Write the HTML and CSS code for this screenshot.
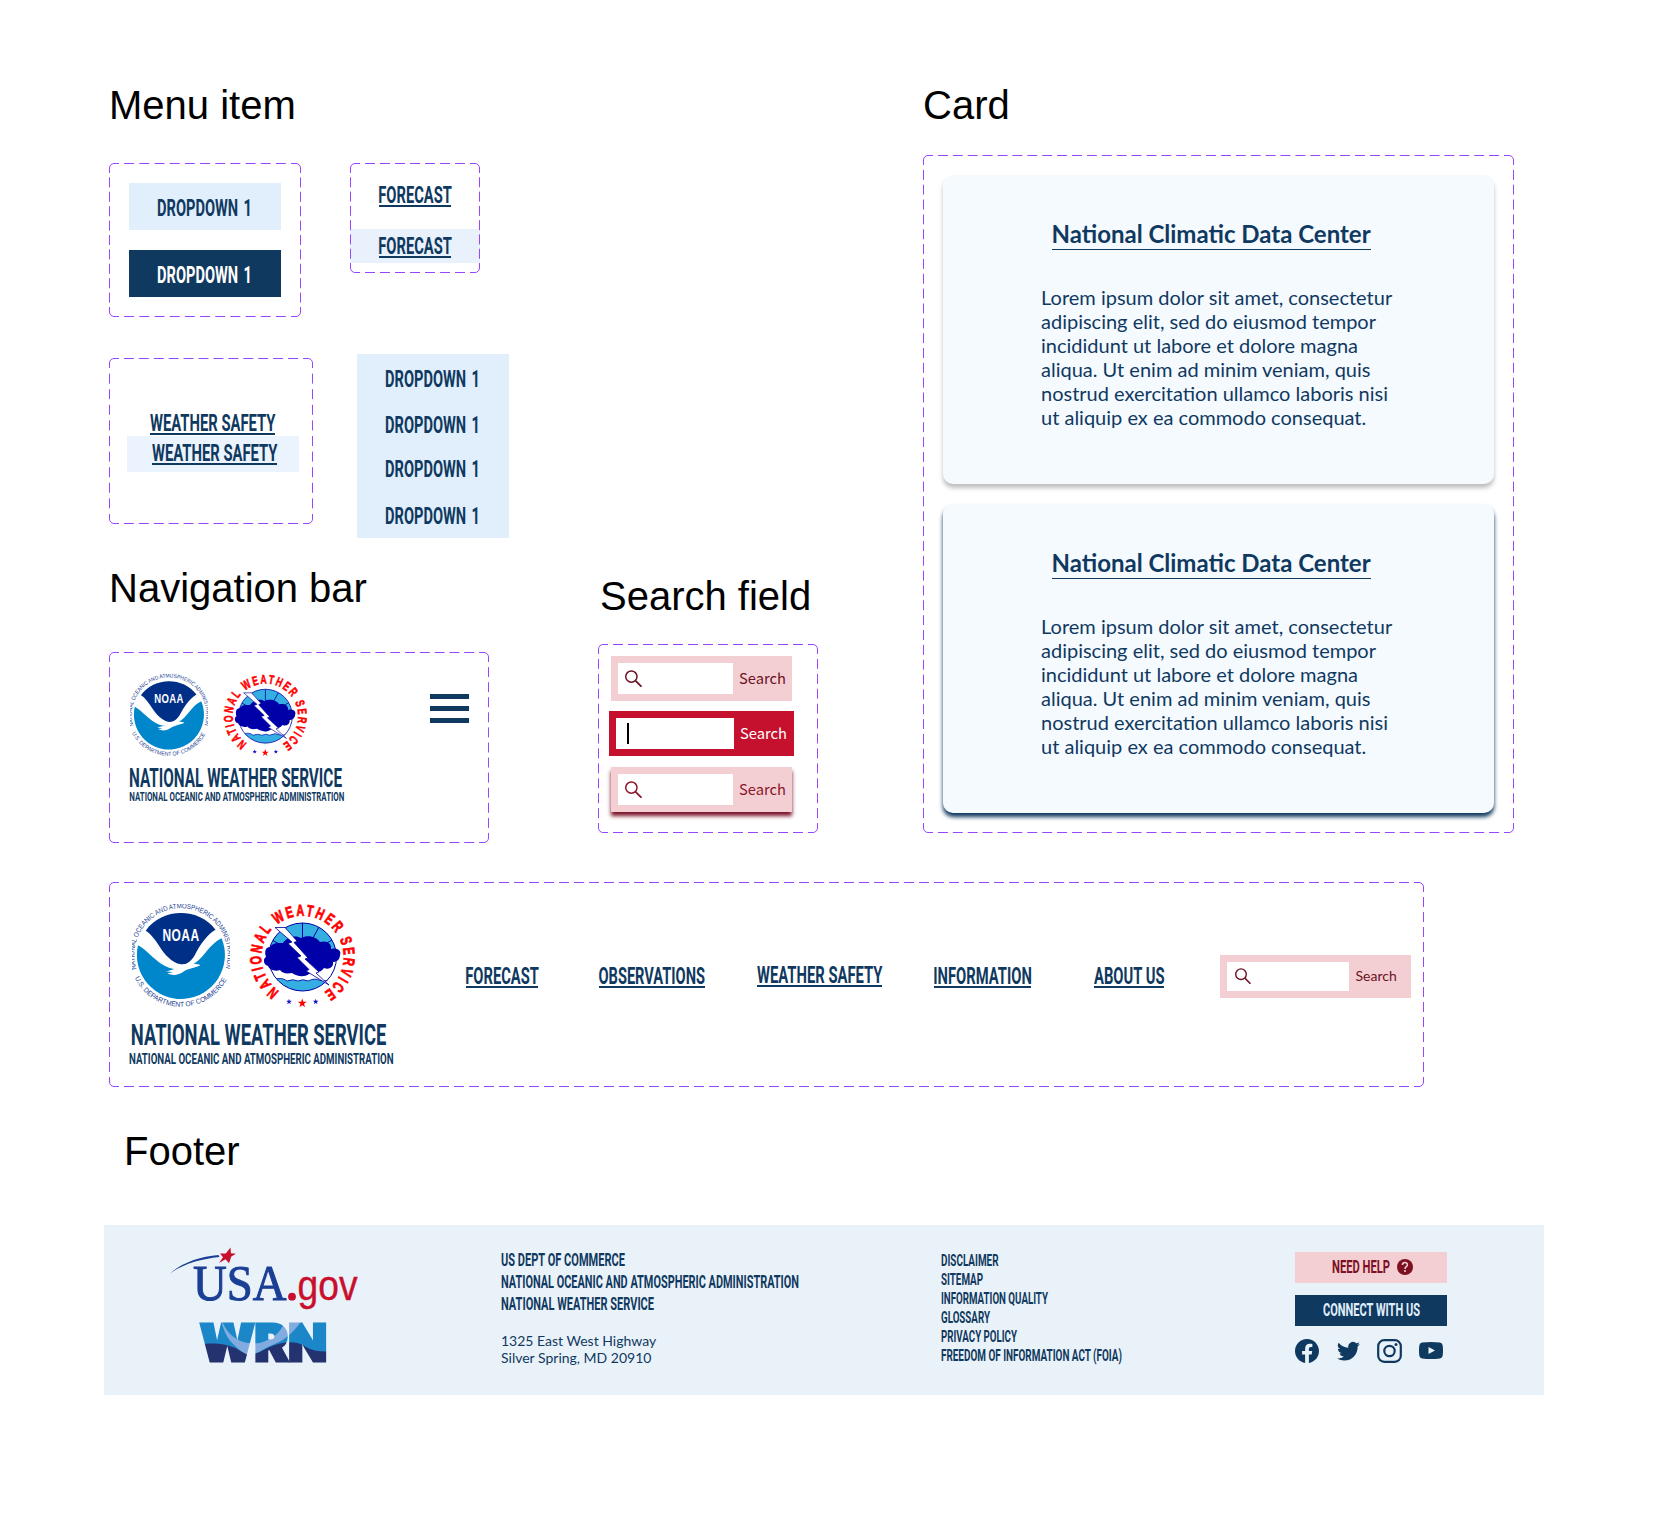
FILE: index.html
```html
<!DOCTYPE html>
<html lang="en">
<head>
<meta charset="utf-8">
<title>National Weather Service components</title>
<link rel="stylesheet" href="styles.css">
</head>
<body>
<svg class="defs" width="0" height="0" aria-hidden="true">
  <defs>
    <path id="noaa-top" d="M4.600 65A46.600 46.600 0 1 1 93.400 65"/>
    <path id="noaa-bottom" d="M2.700 74.100A51.700 51.700 0 0 0 95.300 74.100"/>
    <path id="nws-ring" d="M30.400 87.200A41.200 41.200 0 1 1 76.600 87.200"/>
    <clipPath id="nws-disc"><circle cx="53.500" cy="53" r="34"/></clipPath>
    <symbol id="star" viewBox="-10 -10 20 20"><path d="M0-10 2.400-3.200 9.500-3.100 3.800 1.200 5.900 8.100 0 4-5.900 8.100-3.800 1.200-9.500-3.100-2.400-3.200Z"/></symbol>
    <symbol id="noaa" viewBox="0 0 98 103">
      <g transform="translate(0 .7)">
        <circle cx="49" cy="51" r="44" fill="#fff"/>
        <path fill="#002f87" d="M13.700 26C30 2.500 67 2.500 83.500 25C75 30 68 40 63 50C59 57 54 59.700 50.500 59.700C43 59.500 35 53 29 44C24 36 19 29 13.700 26Z"/>
        <path fill="#0086cb" d="M6 40.500C15 45 25 59 37 63C44 65.500 49 64 53 62.500C71 59 74 41 89.600 33.500A44 44 0 1 1 6 40.500Z"/>
        <path fill="#fff" d="M34 66.500C42 65 46 63 51 59.500C59 60 64 58.500 68.500 60.500C60 64 57 63.500 52 66.500C46 71 40 71 35.500 68.500L41 67.500Z"/>
      </g>
      <text class="noaa-word" x="30.500" y="36.600" textLength="37" lengthAdjust="spacingAndGlyphs">NOAA</text>
      <text class="noaa-ring"><textPath href="#noaa-top" textLength="174" lengthAdjust="spacingAndGlyphs">NATIONAL OCEANIC AND ATMOSPHERIC ADMINISTRATION</textPath></text>
      <text class="noaa-ring"><textPath href="#noaa-bottom" textLength="113" lengthAdjust="spacingAndGlyphs">U.S. DEPARTMENT OF COMMERCE</textPath></text>
    </symbol>
    <symbol id="nws" viewBox="0 0 106 103">
      <g clip-path="url(#nws-disc)">
        <path fill="#fff" d="M19 19H88V88H19Z"/>
        <path fill="#35aee2" d="M19 19H88V45H19Z"/>
        <path fill="none" stroke="#0000a0" d="M53.500 53V19M53.500 53 36 23M53.500 53 23 36M53.500 53 70 23M53.500 53 83 36"/>
        <path fill="#35aee2" stroke="#0000a0" stroke-width=".8" d="M19 78C27 74 33 73 38 77Q44 74.500 49 77Q54 74.500 59 77Q66 73.500 71 76.500L88 77V90H19Z"/>
      </g>
      <circle cx="53.500" cy="53" r="34" fill="none" stroke="#0000a0"/>
      <path fill="#0000a8" d="M21 43C24 38 30 39 34 39C38 32 48 31 52 34C59 30 68 33 71 38C78 36 83 40 82 45C88 43 93 47 91 51C91 56 87 58 84 58C85 63 80 66 75 64C71 70 63 68 60 70C55 74 47 72 43 69C37 70 33 69 31 66C25 68 20 65 19 62C14 61 14 54 17 53C15 47 17 43 21 43Z"/>
      <path fill="#fff" stroke="#0000a0" stroke-width=".8" d="M26 23.500H36L48 37 45 38.500 59 54 56 55 70 68 67 69 80 81 57 67 60 65.500 48 53.500 52 52 39 39.500 43 38Z"/>
      <text class="nws-letters"><textPath href="#nws-ring" textLength="213" lengthAdjust="spacingAndGlyphs">NATIONAL WEATHER SERVICE</textPath></text>
      <use href="#star" x="48.500" y="94.500" width="9.500" height="9.500" fill="#f00"/>
      <use href="#star" x="37" y="94.800" width="6" height="6" fill="#1a1ac8"/>
      <use href="#star" x="63.700" y="94.800" width="6" height="6" fill="#1a1ac8"/>
    </symbol>
    <symbol id="glass" viewBox="0 0 16 16"><circle cx="6" cy="6.200" r="5.300" fill="none" stroke="currentColor" stroke-width="1.400"/><path d="M9.800 10 15.500 15.800" fill="none" stroke="currentColor" stroke-width="1.600"/></symbol>
  </defs>
</svg>

<main class="board">
  <div class="upper">
    <div class="left">
      <h2>Menu item</h2>
      <div class="row row-a">
        <div class="frame f-dropdown">
          <svg class="dash" width="192" height="154"><path stroke-dasharray="10 5.170" stroke-dashoffset="5" d="M5 .5H187M5 153.500H187"/><path stroke-dasharray="10 4.400" stroke-dashoffset="5" d="M.5 5V149M191.500 5V149"/><path d="M.5 5A4.500 4.500 0 0 1 5 .5M187 .5A4.500 4.500 0 0 1 191.500 5M191.500 149A4.500 4.500 0 0 1 187 153.500M5 153.500A4.500 4.500 0 0 1 .5 149"/></svg>
          <div class="dropdown"><svg class="cn" width="95" height="17"><text y="17" textLength="95" lengthAdjust="spacingAndGlyphs">DROPDOWN 1</text></svg></div>
          <div class="dropdown dark"><svg class="cn" width="95" height="17"><text y="17" textLength="95" lengthAdjust="spacingAndGlyphs">DROPDOWN 1</text></svg></div>
        </div>
        <div class="frame f-forecast">
          <svg class="dash" width="130" height="110"><path stroke-dasharray="10 5" stroke-dashoffset="5" d="M5 .5H125M5 109.500H125"/><path stroke-dasharray="10 4.290" stroke-dashoffset="5" d="M.5 5V105M129.500 5V105"/><path d="M.5 5A4.500 4.500 0 0 1 5 .5M125 .5A4.500 4.500 0 0 1 129.500 5M129.500 105A4.500 4.500 0 0 1 125 109.500M5 109.500A4.500 4.500 0 0 1 .5 105"/></svg>
          <div class="fc"><a class="link"><svg class="cn" width="72" height="17"><text y="17" x="-.7" textLength="73.500" lengthAdjust="spacingAndGlyphs">FORECAST</text></svg></a></div>
          <div class="fc hover"><a class="link"><svg class="cn" width="72" height="17"><text y="17" x="-.7" textLength="73.500" lengthAdjust="spacingAndGlyphs">FORECAST</text></svg></a></div>
        </div>
      </div>
      <div class="row row-b">
        <div class="frame f-safety">
          <svg class="dash" width="204" height="166"><path stroke-dasharray="10 4.920" stroke-dashoffset="5" d="M5 .5H199M5 165.500H199"/><path stroke-dasharray="10 5.600" stroke-dashoffset="5" d="M.5 5V161M203.500 5V161"/><path d="M.5 5A4.500 4.500 0 0 1 5 .5M199 .5A4.500 4.500 0 0 1 203.500 5M203.500 161A4.500 4.500 0 0 1 199 165.500M5 165.500A4.500 4.500 0 0 1 .5 161"/></svg>
          <div class="ws"><a class="link"><svg class="cn" width="125" height="17"><text y="17" textLength="125.500" lengthAdjust="spacingAndGlyphs">WEATHER SAFETY</text></svg></a></div>
          <div class="ws hover"><a class="link"><svg class="cn" width="125" height="17"><text y="17" textLength="125.500" lengthAdjust="spacingAndGlyphs">WEATHER SAFETY</text></svg></a></div>
        </div>
        <div class="panel">
          <svg class="cn" width="95" height="17"><text y="17" textLength="95" lengthAdjust="spacingAndGlyphs">DROPDOWN 1</text></svg>
          <svg class="cn" width="95" height="17"><text y="17" textLength="95" lengthAdjust="spacingAndGlyphs">DROPDOWN 1</text></svg>
          <svg class="cn" width="95" height="17"><text y="17" textLength="95" lengthAdjust="spacingAndGlyphs">DROPDOWN 1</text></svg>
          <svg class="cn" width="95" height="17"><text y="17" textLength="95" lengthAdjust="spacingAndGlyphs">DROPDOWN 1</text></svg>
        </div>
      </div>
      <div class="row row-c">
        <section class="nav-col">
          <h2>Navigation bar</h2>
          <div class="frame f-mobile">
            <svg class="dash" width="380" height="191"><path stroke-dasharray="10 4.800" stroke-dashoffset="5" d="M5 .5H375M5 190.500H375"/><path stroke-dasharray="10 5.080" stroke-dashoffset="5" d="M.5 5V186M379.500 5V186"/><path d="M.5 5A4.500 4.500 0 0 1 5 .5M375 .5A4.500 4.500 0 0 1 379.500 5M379.500 186A4.500 4.500 0 0 1 375 190.500M5 190.500A4.500 4.500 0 0 1 .5 186"/></svg>
            <div class="brand">
              <div class="logos"><svg width="78" height="82"><use href="#noaa"/></svg><svg width="84" height="82"><use href="#nws"/></svg></div>
              <svg class="cn title" width="212" height="18"><text x="-1" y="18" textLength="213" lengthAdjust="spacingAndGlyphs">NATIONAL WEATHER SERVICE</text></svg>
              <svg class="cn sub" width="215" height="9"><text x="-.7" y="9" textLength="215" lengthAdjust="spacingAndGlyphs">NATIONAL OCEANIC AND ATMOSPHERIC ADMINISTRATION</text></svg>
            </div>
            <div class="burger"><i></i><i></i><i></i></div>
          </div>
        </section>
        <section class="search-col">
          <h2>Search field</h2>
          <div class="frame f-search">
            <svg class="dash" width="220" height="189"><path stroke-dasharray="10 5" stroke-dashoffset="5" d="M5 .5H215M5 188.500H215"/><path stroke-dasharray="10 4.920" stroke-dashoffset="5" d="M.5 5V184M219.500 5V184"/><path d="M.5 5A4.500 4.500 0 0 1 5 .5M215 .5A4.500 4.500 0 0 1 219.500 5M219.500 184A4.500 4.500 0 0 1 215 188.500M5 188.500A4.500 4.500 0 0 1 .5 184"/></svg>
            <div class="search"><div class="field"><svg width="17" height="17"><use href="#glass"/></svg></div><span>Search</span></div>
            <div class="search active"><div class="field"><b class="caret"></b></div><span>Search</span></div>
            <div class="search raised"><div class="field"><svg width="17" height="17"><use href="#glass"/></svg></div><span>Search</span></div>
          </div>
        </section>
      </div>
    </div>
    <div class="right">
      <h2>Card</h2>
      <div class="frame f-cards">
        <svg class="dash" width="591" height="678"><path stroke-dasharray="10 4.897" stroke-dashoffset="5" d="M5 .5H586M5 677.500H586"/><path stroke-dasharray="10 4.844" stroke-dashoffset="5" d="M.5 5V673M590.500 5V673"/><path d="M.5 5A4.500 4.500 0 0 1 5 .5M586 .5A4.500 4.500 0 0 1 590.500 5M590.500 673A4.500 4.500 0 0 1 586 677.500M5 677.500A4.500 4.500 0 0 1 .5 673"/></svg>
        <article class="card"><h3>National Climatic Data Center</h3><p>Lorem ipsum dolor sit amet, consectetur adipiscing elit, sed do eiusmod tempor incididunt ut labore et dolore magna aliqua. Ut enim ad minim veniam, quis nostrud exercitation ullamco laboris nisi ut aliquip ex ea commodo consequat.</p></article>
        <article class="card lifted"><h3>National Climatic Data Center</h3><p>Lorem ipsum dolor sit amet, consectetur adipiscing elit, sed do eiusmod tempor incididunt ut labore et dolore magna aliqua. Ut enim ad minim veniam, quis nostrud exercitation ullamco laboris nisi ut aliquip ex ea commodo consequat.</p></article>
      </div>
    </div>
  </div>

  <div class="frame f-desktop">
    <svg class="dash" width="1315" height="205"><path stroke-dasharray="10 5" stroke-dashoffset="5" d="M5 .5H1310M5 204.500H1310"/><path stroke-dasharray="10 5" stroke-dashoffset="5" d="M.5 5V200M1314.500 5V200"/><path d="M.5 5A4.500 4.500 0 0 1 5 .5M1310 .5A4.500 4.500 0 0 1 1314.500 5M1314.500 200A4.500 4.500 0 0 1 1310 204.500M5 204.500A4.500 4.500 0 0 1 .5 200"/></svg>
    <div class="brand big">
      <div class="logos"><svg width="98" height="103"><use href="#noaa"/></svg><svg width="106" height="103"><use href="#nws"/></svg></div>
      <svg class="cn title" width="254.500" height="21"><text x="-1.200" y="21" textLength="255.500" lengthAdjust="spacingAndGlyphs">NATIONAL WEATHER SERVICE</text></svg>
      <svg class="cn sub" width="264" height="11"><text x="-1" y="11" textLength="264.500" lengthAdjust="spacingAndGlyphs">NATIONAL OCEANIC AND ATMOSPHERIC ADMINISTRATION</text></svg>
    </div>
    <nav>
      <a class="link"><svg class="cn" width="72" height="17"><text x="-.7" y="17" textLength="73.500" lengthAdjust="spacingAndGlyphs">FORECAST</text></svg></a>
      <a class="link"><svg class="cn" width="105.500" height="17"><text x="-.5" y="17" textLength="106.500" lengthAdjust="spacingAndGlyphs">OBSERVATIONS</text></svg></a>
      <a class="link up"><svg class="cn" width="125" height="17"><text y="17" textLength="125.500" lengthAdjust="spacingAndGlyphs">WEATHER SAFETY</text></svg></a>
      <a class="link"><svg class="cn" width="97" height="17"><text x="-.7" y="17" textLength="98.500" lengthAdjust="spacingAndGlyphs">INFORMATION</text></svg></a>
      <a class="link"><svg class="cn" width="70" height="17"><text y="17" textLength="70.500" lengthAdjust="spacingAndGlyphs">ABOUT US</text></svg></a>
    </nav>
    <div class="search wide"><div class="field"><svg width="16" height="16"><use href="#glass"/></svg></div><span>Search</span></div>
  </div>

  <h2 class="footer-heading">Footer</h2>
  <footer>
    <div class="marks">
      <svg class="usa" width="190" height="63" viewBox="0 0 190 63">
        <path fill="#1a3f94" d="M0 25.500C13 14 31 8.500 48.500 7L49.500 9C31 11 14 15.500 0 25.500Z"/>
        <path fill="#c8102e" d="M60.500-.5 60.900 5.200 66 5.700 61.300 8.600 59 15.200 55.500 11.200 49 15 53 9.200 50 5.500 55.800 5.600Z"/>
        <text class="usa-word" x="23" y="52.300" textLength="93.500" lengthAdjust="spacingAndGlyphs">USA</text>
        <circle cx="122" cy="48.700" r="3.900" fill="#c8102e"/>
        <text class="usa-gov" x="127.500" y="52" textLength="60" lengthAdjust="spacingAndGlyphs">gov</text>
      </svg>
      <svg class="wrn" width="126" height="39" viewBox="0 0 126 39">
        <defs><pattern id="waves" patternUnits="userSpaceOnUse" x="-4" y="-4" width="140" height="50" viewBox="-4 -4 140 50">
          <path fill="#1b87c9" d="M-4-4H136V46H-4Z"/>
          <path fill="#24336f" d="M-4 22C12 19 30 20 42 29Q50 33 60 29C72 22 92 14 106 24Q116 30 136 28V46H-4Z"/>
          <path fill="#82acdf" d="M21-4C29 17 45 22 60 20C74 16 82 8 86-4H103C92 12 83 18 70 23C60 28 52 34 46 31C34 24 24 14 21-4Z"/>
        </pattern></defs>
        <text class="wrn-word" x="0" y="37.900" textLength="127" lengthAdjust="spacingAndGlyphs">WRN</text>
      </svg>
    </div>
    <div class="agency">
      <svg class="cn s18" width="124" height="13"><text y="13" textLength="124" lengthAdjust="spacingAndGlyphs">US DEPT OF COMMERCE</text></svg>
      <svg class="cn s18" width="298" height="13"><text y="13" textLength="298" lengthAdjust="spacingAndGlyphs">NATIONAL OCEANIC AND ATMOSPHERIC ADMINISTRATION</text></svg>
      <svg class="cn s18" width="153" height="13"><text y="13" textLength="153" lengthAdjust="spacingAndGlyphs">NATIONAL WEATHER SERVICE</text></svg>
      <address>1325 East West Highway<br>Silver Spring, MD 20910</address>
    </div>
    <div class="links">
      <svg class="cn s16" width="57.500" height="11"><text y="11" textLength="57.500" lengthAdjust="spacingAndGlyphs">DISCLAIMER</text></svg>
      <svg class="cn s16" width="42" height="11"><text y="11" textLength="42" lengthAdjust="spacingAndGlyphs">SITEMAP</text></svg>
      <svg class="cn s16" width="107" height="11"><text y="11" textLength="107" lengthAdjust="spacingAndGlyphs">INFORMATION QUALITY</text></svg>
      <svg class="cn s16" width="49" height="11"><text y="11" textLength="49" lengthAdjust="spacingAndGlyphs">GLOSSARY</text></svg>
      <svg class="cn s16" width="76" height="11"><text y="11" textLength="76" lengthAdjust="spacingAndGlyphs">PRIVACY POLICY</text></svg>
      <svg class="cn s16" width="181" height="11"><text y="11" textLength="181" lengthAdjust="spacingAndGlyphs">FREEDOM OF INFORMATION ACT (FOIA)</text></svg>
    </div>
    <div class="actions">
      <div class="btn help"><svg class="cn s18" width="58" height="13"><text y="13" textLength="58" lengthAdjust="spacingAndGlyphs">NEED HELP</text></svg><svg width="16" height="16" viewBox="0 0 16 16"><circle cx="8" cy="8" r="8" fill="currentColor"/><path fill="none" stroke="#f3cfd4" stroke-width="1.500" d="M5.400 6C5.500 2.700 10.500 2.800 10.400 5.900C10.300 7.800 8 7.600 8 10"/><circle cx="8" cy="12" r="1" fill="#f3cfd4"/></svg></div>
      <div class="btn connect"><svg class="cn s18" width="97" height="13"><text y="13" textLength="97" lengthAdjust="spacingAndGlyphs">CONNECT WITH US</text></svg></div>
      <div class="social">
        <svg width="24" height="24" viewBox="0 0 16 16"><path fill="currentColor" d="M16 8.049c0-4.446-3.582-8.050-8-8.050C3.580 0-.002 3.603-.002 8.050c0 4.017 2.926 7.347 6.750 7.951v-5.625h-2.030V8.050H6.750V6.275c0-2.017 1.195-3.131 3.022-3.131.876 0 1.791.157 1.791.157v1.980h-1.009c-.993 0-1.303.621-1.303 1.258v1.510h2.218l-.354 2.326H9.250V16c3.824-.604 6.750-3.934 6.750-7.951"/></svg>
        <svg width="23" height="23" viewBox="0 0 16 16"><path fill="currentColor" d="M5.026 15c6.038 0 9.341-5.003 9.341-9.334q.002-.211-.006-.422A6.700 6.700 0 0 0 16 3.542a6.700 6.700 0 0 1-1.889.518 3.300 3.300 0 0 0 1.447-1.817 6.500 6.500 0 0 1-2.087.793A3.286 3.286 0 0 0 7.875 6.030a9.320 9.320 0 0 1-6.767-3.429 3.290 3.290 0 0 0 1.018 4.382A3.300 3.300 0 0 1 .64 6.575v.045a3.290 3.290 0 0 0 2.632 3.218 3.200 3.200 0 0 1-.865.115 3 3 0 0 1-.614-.057 3.280 3.280 0 0 0 3.067 2.277A6.600 6.600 0 0 1 .78 13.580a6 6 0 0 1-.78-.045A9.340 9.340 0 0 0 5.026 15"/></svg>
        <svg width="25" height="24" viewBox="0 0 25 24" fill="none" stroke="currentColor"><rect x="1.200" y="1.200" width="22.600" height="21.600" rx="6" stroke-width="2.200"/><circle cx="12.500" cy="12" r="5.200" stroke-width="2.200"/><circle cx="19" cy="5.600" r="1.500" fill="currentColor" stroke="none"/></svg>
        <svg width="24" height="17" viewBox="0 0 24 17"><path fill="currentColor" fill-rule="evenodd" d="M3 .6Q12-.4 21 .6 23.400.9 23.700 3.500 24.300 8.500 23.700 13.500 23.400 16 21 16.400 12 17.400 3 16.400.6 16 .3 13.500-.3 8.500.3 3.500.6.9 3 .6ZM9.500 5V12L16 8.500Z"/></svg>
      </div>
    </div>
  </footer>
</main>
</body>
</html>
```
FILE: styles.css
```css
* { box-sizing: border-box; }
body { margin: 0; background: #fff; color: #10395f; font-family: Lato, "Liberation Sans", sans-serif; }
svg { display: block; flex: none; }
.defs { position: absolute; }
.board { width: 1679px; height: 1521px; padding: 81px 0 0 104px; overflow: hidden; }
h2 { margin: 0; font: 400 40px/48px "Liberation Sans", Arial, sans-serif; color: #000; white-space: nowrap; }

.upper { display: flex; padding-left: 5px; }
.left { width: 814px; }
.row { display: flex; align-items: flex-start; }
.row-a { margin-top: 34px; gap: 49px; }
.row-b { margin-top: 37px; gap: 44px; }
.row-c { margin-top: 26px; }

/* dashed component frames */
.frame { position: relative; }
.dash { position: absolute; left: 0; top: 0; fill: none; stroke: #9747ff; stroke-width: 1; pointer-events: none; z-index: 1; }

/* condensed capitals */
.cn { overflow: visible; fill: currentColor; }
.cn text { font: 700 24px Roboto, "Liberation Sans", sans-serif; }
.cn.s18 text { font-size: 18px; }
.cn.s16 text { font-size: 15.800px; }
.link { display: block; padding-bottom: 2px; border-bottom: 2px solid currentColor; }

.f-dropdown { width: 192px; height: 154px; padding: 20px; display: flex; flex-direction: column; gap: 20px; }
.dropdown { height: 47px; padding: 16px 0 0 27.500px; background: #e1effd; }
.dropdown.dark { background: #10395f; color: #fff; }
.dropdown text, .panel text { word-spacing: 3px; }

.f-forecast { width: 130px; height: 110px; padding-top: 16px; }
.fc { height: 50px; padding: 7px 29px 0; }
.fc.hover { height: 34px; background: #e8f1fc; padding-top: 7.500px; }

.f-safety { width: 204px; height: 166px; margin-top: 4px; padding: 56px 14px 0 18px; }
.ws { width: 125px; margin-left: 23.300px; height: 22px; }
.ws.hover { width: 172px; height: 36px; margin-left: 0; padding: 8px 21.500px 0 25px; background: #ebf3fe; }
.ws.hover .link { width: 125px; }

.panel { width: 152px; height: 184px; padding: 16px 0 0 27.500px; background: #e1effd; display: flex; flex-direction: column; gap: 29px; }
.panel .cn:nth-child(3) { margin-top: -2.300px; }
.panel .cn:nth-child(4) { margin-top: 1.200px; }

.nav-col { width: 489px; }
.nav-col .frame { margin-top: 40px; }
.f-mobile { width: 380px; height: 191px; padding: 21.700px 20px 0 20.500px; display: flex; }
.logos { display: flex; gap: 15px; margin-left: .5px; }
.title { margin: 13.600px 0 0 .5px; }
.title text { font-size: 25.500px; }
.sub { margin-top: 5px; }
.sub text { font-size: 13px; }
.burger { margin: 20.300px 0 0 85.500px; display: flex; flex-direction: column; gap: 7px; }
.burger i { width: 39px; height: 5px; background: #10395f; }

.search-col { padding-top: 8px; }
.search-col h2 { padding-left: 2px; }
.f-search { width: 220px; height: 189px; margin-top: 24px; padding: 12.400px 0 0 13px; }
.search { width: 181px; height: 45px; padding: 7px; display: flex; background: #f3cfd4; color: #6b1223; }
.search span { font: 400 14.700px/19px "Noto Sans CJK SC", Lato, sans-serif; margin: 5px 0 0 6px; }
.field { flex: none; width: 115px; height: 31px; background: #fff; padding: 7px 0 0 7px; }
.search.active { width: 185px; margin: 10px 0 11px -2px; background: #c5112e; color: #fff; }
.active .field { width: 118px; padding: 5px 0 0 11px; }
.caret { display: block; width: 2px; height: 21px; background: #000; }
.search.raised { color: #8a1529; box-shadow: 0 4px 4px #7a1226; }

.right h2 { margin-bottom: 26px; }
.f-cards { width: 591px; height: 678px; padding: 20px; display: flex; flex-direction: column; gap: 20px; }
.card { height: 309px; border-radius: 10px; background: #f5faff; box-shadow: 0 4px 4px rgba(0, 0, 0, .25); padding: 44px 0 0 98px; }
.card.lifted { box-shadow: 0 4px 4px #10395f; }
.card h3 { width: max-content; margin: 0 0 35px 10.500px; font-size: 24px; line-height: 29px; font-weight: 700; padding-bottom: 1px; border-bottom: 1px solid #10395f; }
.card p { margin: 0; width: 363px; font-size: 20px; line-height: 24px; }

.f-desktop { margin: 39px 0 0 5px; width: 1315px; height: 205px; padding: 22px 13px 0 20.500px; display: flex; }
.big { width: 336.500px; }
.big .logos { gap: 18.500px; margin-left: 2.500px; }
.big .title { margin: 17px 0 0 2px; }
.big .title text { font-size: 29px; }
.big .sub { margin-top: 8px; }
.big .sub text { font-size: 15.500px; }
nav { display: flex; align-items: flex-start; padding-top: 63px; width: 754px; }
nav .link:nth-child(2) { margin-left: 61.300px; }
nav .link:nth-child(3) { margin: -1px 0 0 52.500px; }
nav .link:nth-child(4) { margin-left: 51.300px; }
nav .link:nth-child(5) { margin-left: 63px; }
.search.wide { width: 191px; height: 43px; margin-top: 51px; }
.wide .field { width: 121.500px; height: 29px; padding: 6px 0 0 8px; }
.search.wide span { font: 400 14px/17px Lato, sans-serif; margin: 5px 0 0 7px; }

.footer-heading { margin: 40px 0 0 20px; }
footer { margin-top: 50px; width: 1440px; height: 170px; background: #eaf2f9; display: flex; }
.marks { width: 397px; padding: 23px 0 0 66px; }
.usa, .wrn { overflow: visible; }
.wrn { margin: 12px 0 0 30px; }
.usa-word { font: 400 51px "Liberation Serif", serif; fill: #1a3f94; stroke: #1a3f94; stroke-width: 1px; }
.usa-gov { font: 400 42px "Liberation Sans", sans-serif; fill: #c8102e; stroke: #c8102e; stroke-width: .4px; }
.wrn-word { font: 900 51px Inter, sans-serif; fill: url(#waves); stroke: url(#waves); stroke-width: 3px; }
.agency { width: 440px; padding-top: 28px; display: flex; flex-direction: column; gap: 9px; }
address { font: 400 14px/17px Lato, sans-serif; margin-top: 13px; }
.links { width: 354px; padding-top: 30px; display: flex; flex-direction: column; gap: 8px; }
.actions { width: 152px; padding-top: 27px; }
.btn { height: 31px; display: flex; align-items: flex-start; }
.help { background: #f3cfd4; color: #7d1021; padding: 7px 0 0 37px; gap: 7px; }
.help .cn { margin-top: 1px; }
.connect { background: #10395f; color: #e1effd; margin-top: 12px; padding: 8px 0 0 28px; }
.social { display: flex; align-items: center; margin-top: 12.500px; }
.social svg:nth-child(2) { margin-left: 18px; }
.social svg:nth-child(3) { margin-left: 17px; }
.social svg:nth-child(4) { margin-left: 17px; }

.noaa-word { font: 700 16px "Liberation Sans", sans-serif; fill: #fff; letter-spacing: .6px; }
.noaa-ring { font: 400 7px "Liberation Sans", sans-serif; fill: #1c3f94; }
.nws-letters { font: 700 16px "Liberation Sans", sans-serif; fill: #f00; stroke: #f00; stroke-width: .7px; letter-spacing: 3px; }
```
